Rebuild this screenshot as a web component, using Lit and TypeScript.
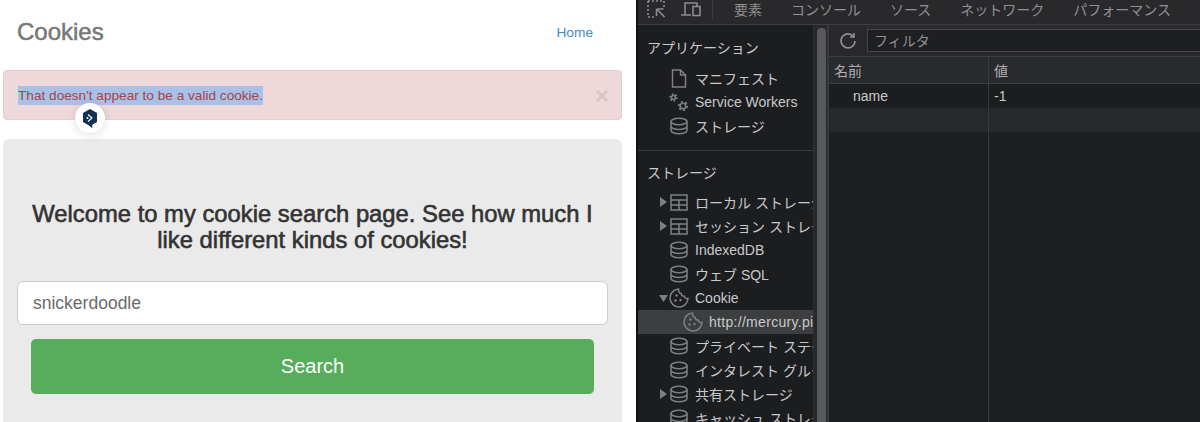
import { html, css, LitElement, svg } from "lit";
import { customElement } from "lit/decorators.js";

const gear = (cx: number, cy: number, r: number) => svg`
  <circle cx=${cx} cy=${cy} r=${r} stroke-width="1.600" />
  <circle cx=${cx} cy=${cy} r=${r + 1.5} stroke-width="1.500" pathLength="12" stroke-dasharray="1 1" />
`;

const cookieDots = svg`
  <circle cx="7.500" cy="7.500" r="1.200" fill="#7f8082" stroke="none" />
  <circle cx="6.500" cy="12.500" r="1.200" fill="#7f8082" stroke="none" />
  <circle cx="11.500" cy="12" r="1.200" fill="#7f8082" stroke="none" />
`;

const icons: Record<string, unknown> = {
  file: svg`<path d="M3.500 2h8l5 5v12h-13zM11.500 2v5h5" />`,
  gears: svg`${gear(4.500, 5.500, 2)}${gear(14, 14, 2.800)}`,
  db: svg`<ellipse cx="10" cy="5.500" rx="8" ry="3.200" /><path d="M2 5.500v9c0 1.800 3.600 3.200 8 3.200s8-1.400 8-3.200v-9M2 10.200c0 1.800 3.600 3.200 8 3.200s8-1.400 8-3.200" />`,
  table: svg`<path d="M2 3h16v15H2zM2 8h16M2 13h16M10 8v10" />`,
  cookie: svg`<path d="M9.500 1a9 9 0 1 0 9.500 9.500c-2 .4-3.300-.6-3.600-2.200-1.800.2-3.200-.9-3.200-2.700C10.500 5.500 9.200 3 9.500 1z" />${cookieDots}`,
};

type Row = { label: string; icon?: string; arrow?: "right" | "down"; selected?: boolean; indent?: boolean };

const appRows: Row[] = [
  { label: "マニフェスト", icon: "file" },
  { label: "Service Workers", icon: "gears" },
  { label: "ストレージ", icon: "db" },
];

const storageRows: Row[] = [
  { label: "ローカル ストレージ", icon: "table", arrow: "right" },
  { label: "セッション ストレージ", icon: "table", arrow: "right" },
  { label: "IndexedDB", icon: "db" },
  { label: "ウェブ SQL", icon: "db" },
  { label: "Cookie", icon: "cookie", arrow: "down" },
  { label: "http://mercury.picoctf.net", icon: "cookie", selected: true, indent: true },
  { label: "プライベート ステート トークン", icon: "db" },
  { label: "インタレスト グループ", icon: "db" },
  { label: "共有ストレージ", icon: "db", arrow: "right" },
  { label: "キャッシュ ストレージ", icon: "db" },
];

const tabs = ["要素", "コンソール", "ソース", "ネットワーク", "パフォーマンス"];

@customElement("app-root")
export class AppRoot extends LitElement {
  static styles = css`
    :host {
      display: grid;
      grid-template-columns: 636px 564px;
      width: 1200px;
      height: 422px;
      overflow: hidden;
      font-family: "Liberation Sans", "Noto Sans CJK JP", sans-serif;
    }

    /* left: the page */
    .page {
      position: relative;
      background: #fff;
      height: 422px;
      overflow: hidden;
    }
    .nav {
      display: flex;
      justify-content: space-between;
      align-items: center;
      height: 70px;
      padding: 0 43px 6px 17px;
      box-sizing: border-box;
    }
    .nav h3 {
      margin: 0;
      font-size: 24px;
      font-weight: 500;
      color: #777;
      -webkit-text-stroke: 0.5px #777;
    }
    .nav a {
      font-size: 13.700px;
      color: #4287c9;
    }
    .alert {
      display: flex;
      justify-content: space-between;
      align-items: center;
      box-sizing: border-box;
      width: 619px;
      height: 50px;
      margin-left: 3px;
      padding: 0 12px 0 14px;
      background: #eed8d9;
      border: 1px solid #e8cdd0;
      border-radius: 4px;
      font-size: 13.630px;
      color: #a94442;
    }
    .alert .sel {
      background: #a8c1e8;
      line-height: 19px;
    }
    .close {
      font-size: 24px;
      font-weight: 700;
      color: #dfc0c4;
      line-height: 1;
      padding-top: 1px;
    }
    .badge {
      position: absolute;
      left: 75px;
      top: 103px;
      width: 30px;
      height: 30px;
      border-radius: 50%;
      background: #fff;
      box-shadow: 0 2px 10px rgba(0, 0, 0, 0.12);
      display: flex;
      align-items: center;
      justify-content: center;
    }
    .jumbo {
      box-sizing: border-box;
      width: 619px;
      height: 300px;
      margin: 19px 0 0 3px;
      padding: 62px 14px 0;
      background: #eaeaea;
      border-radius: 6px;
    }
    .jumbo h3 {
      margin: 0 0 28px;
      font-size: 23.800px;
      line-height: 26px;
      font-weight: 500;
      text-align: center;
      color: #333;
      -webkit-text-stroke: 0.6px #333;
    }
    .input {
      box-sizing: border-box;
      height: 44px;
      width: 591px;
      padding: 0 15px;
      display: flex;
      align-items: center;
      background: #fff;
      border: 1px solid #ccc;
      border-radius: 6px;
      font-size: 17.500px;
      color: #6a6a6a;
    }
    .btn {
      height: 55px;
      margin: 14px 14px 0;
      width: 563px;
      display: flex;
      align-items: center;
      justify-content: center;
      background: #57ad5c;
      border-radius: 5px;
      font-size: 20px;
      color: #fff;
    }

    /* right: devtools */
    .devtools {
      background: #1e1f21;
      border-left: 2px solid #111;
      box-sizing: border-box;
      height: 422px;
      display: flex;
      flex-direction: column;
      overflow: hidden;
      color: #d4d5d7;
    }
    .topbar {
      flex: none;
      height: 25px;
      box-sizing: border-box;
      display: flex;
      align-items: center;
      background: #29292c;
      border-bottom: 1px solid #3e3f42;
      padding: 0 0 6px 9px;
      font-size: 14px;
      color: #8f9092;
    }
    .topbar svg {
      flex: none;
    }
    .topbar .sep {
      width: 1px;
      height: 19px;
      background: #3e3f42;
      margin: 0 21px 0 11px;
    }
    .tabs {
      display: flex;
      gap: 29px;
      white-space: nowrap;
    }
    .body {
      flex: 1;
      display: grid;
      grid-template-columns: 175px 16px 1fr;
      min-height: 0;
    }
    .side {
      overflow: hidden;
      background: #1c1d1f;
      font-size: 14px;
      white-space: nowrap;
    }
    .title {
      height: 24px;
      line-height: 24px;
      padding-left: 9px;
      color: #c8c9cb;
    }
    .title.first {
      margin-top: 11px;
    }
    .group.apps {
      margin-top: 6px;
    }
    .divider {
      height: 1px;
      background: #3a3b3e;
      margin: 12px 0 10px;
    }
    .group.storage {
      margin-top: 5px;
    }
    .row {
      display: flex;
      align-items: center;
      height: 24px;
      overflow: hidden;
      color: #c8c9cb;
    }
    .row.selected {
      background: #3d3e40;
      letter-spacing: 0.3px;
    }
    .row.indent {
      padding-left: 14px;
    }
    .arrow {
      flex: none;
      width: 10px;
      margin-left: 20px;
      display: flex;
      justify-content: center;
    }
    .row svg.ico {
      flex: none;
      width: 20px;
      height: 20px;
      margin: 0 6px 0 1px;
      fill: none;
      stroke: #7f8082;
      stroke-width: 1.500;
    }
    .scroll {
      background: #27282a;
      border-left: 1px solid #2e2f31;
      border-right: 2px solid #38393b;
      box-sizing: border-box;
      padding: 3px 1px 0 3px;
    }
    .thumb {
      height: 100%;
      background: #58595b;
      border-radius: 4px 4px 0 0;
    }
    .main {
      display: flex;
      flex-direction: column;
      min-width: 0;
    }
    .filter {
      flex: none;
      height: 32px;
      box-sizing: border-box;
      display: flex;
      align-items: center;
      padding: 0 0 0 9px;
      background: #29292c;
      border-bottom: 1px solid #3e3f42;
      gap: 9px;
    }
    .filter .field {
      flex: 1;
      height: 23px;
      box-sizing: border-box;
      background: #1e1f21;
      border: 1px solid #46474a;
      border-right: 0;
      padding-left: 6px;
      line-height: 22px;
      font-size: 14px;
      color: #8f9092;
    }
    .table {
      flex: 1;
      display: grid;
      grid-template-columns: 160px 1fr;
      grid-template-rows: 27px 24px 24px 1fr;
      font-size: 14px;
    }
    .table > div {
      box-sizing: border-box;
      padding-left: 5px;
      display: flex;
      align-items: center;
    }
    .table > div:nth-child(odd) {
      border-right: 1px solid #3a3b3e;
    }
    .th {
      background: #292a2c;
      border-bottom: 1px solid #3e3f42;
      color: #aeafb1;
    }
    .td {
      background: #1c1d1f;
      color: #c8c9cb;
    }
    .td.name {
      padding-left: 24px !important;
    }
    .alt {
      background: #28292b;
    }
  `;

  renderRow(r: Row) {
    return html`<div class="row ${r.selected ? "selected" : ""} ${r.indent ? "indent" : ""}">
      <span class="arrow">
        ${r.arrow === "right"
          ? html`<svg width="8" height="10"><path d="M1 0l7 5-7 5z" fill="#7f8082" /></svg>`
          : r.arrow === "down"
            ? html`<svg width="9" height="7"><path d="M0 0h9L4.500 7z" fill="#7f8082" /></svg>`
            : ""}
      </span>
      <svg class="ico" viewBox="0 0 20 20">${icons[r.icon ?? "db"]}</svg>
      <span>${r.label}</span>
    </div>`;
  }

  render() {
    return html`
      <div class="page">
        <div class="nav">
          <h3>Cookies</h3>
          <a>Home</a>
        </div>
        <div class="alert">
          <span class="sel">That doesn't appear to be a valid cookie.</span>
          <span class="close">×</span>
        </div>
        <div class="badge">
          <svg width="16" height="19" viewBox="0 0 16 19">
            <path d="M8 0l7 4v9l-4.500 2.600-.5 3.400-3-2.600L1 13V4z" fill="#12304f" />
            <path d="M6 5.500l4 3.500-4 3.500" fill="none" stroke="#fff" stroke-width="1.100" />
            <circle cx="5.500" cy="9" r="1" fill="#fff" />
          </svg>
        </div>
        <div class="jumbo">
          <h3>Welcome to my cookie search page. See how much I like different kinds of cookies!</h3>
          <div class="input">snickerdoodle</div>
          <div class="btn">Search</div>
        </div>
      </div>

      <div class="devtools">
        <div class="topbar">
          <svg width="18" height="18" viewBox="0 0 18 18" fill="none" stroke="#8a8b8d" stroke-width="1.600">
            <path d="M1 1h16M1 1v16M17 1v6M1 17h6" stroke-dasharray="2 2" />
            <path d="M9.500 9h7M9.500 9v7M9.500 9l8 8" />
          </svg>
          <svg style="margin-left:16px" width="20" height="18" viewBox="0 0 20 18" fill="none" stroke="#8a8b8d" stroke-width="1.600">
            <path d="M4 15V3h12v3M0 15h10" />
            <rect x="12" y="6.500" width="7" height="9" />
          </svg>
          <span class="sep"></span>
          <div class="tabs">${tabs.map((t) => html`<span>${t}</span>`)}</div>
        </div>
        <div class="body">
          <div class="side">
            <div class="title first">アプリケーション</div>
            <div class="group apps">${appRows.map((r) => this.renderRow(r))}</div>
            <div class="divider"></div>
            <div class="title">ストレージ</div>
            <div class="group storage">${storageRows.map((r) => this.renderRow(r))}</div>
          </div>
          <div class="scroll"><div class="thumb"></div></div>
          <div class="main">
            <div class="filter">
              <svg width="20" height="20" viewBox="0 0 20 20" fill="none" stroke="#8f9092" stroke-width="1.600">
                <path d="M15.500 5.500A7 7 0 1 0 17 10M16 2v4h-4" />
              </svg>
              <div class="field">フィルタ</div>
            </div>
            <div class="table">
              <div class="th">名前</div>
              <div class="th">値</div>
              <div class="td name">name</div>
              <div class="td">-1</div>
              <div class="alt"></div>
              <div class="alt"></div>
              <div></div>
              <div></div>
            </div>
          </div>
        </div>
      </div>
    `;
  }
}
